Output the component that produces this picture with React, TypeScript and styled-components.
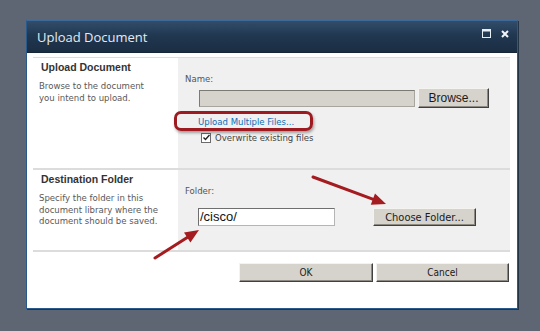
import React from "react"
import styled, { createGlobalStyle } from "styled-components"

const GlobalStyle = createGlobalStyle`
  html, body {
    margin: 0;
    padding: 0;
    background: #5d6672;
  }
  body {
    width: 540px;
    height: 331px;
    overflow: hidden;
    font-family: "DejaVu Sans Condensed", "DejaVu Sans", sans-serif;
  }
`

const App: React.FC = () => {
  return (
    <>
      <GlobalStyle />
      <Dialog>
        <TitleBar>
          <Title>Upload Document</Title>
          <TitleIcons>
            <svg width="9" height="9" viewBox="0 0 9 9">
              <rect x="0.5" y="0.5" width="8" height="8" fill="none" stroke="#e8eef4" strokeWidth="1" />
              <rect x="0.5" y="0.5" width="8" height="2" fill="#e8eef4" />
            </svg>
            <svg width="8" height="8" viewBox="0 0 8 8">
              <path d="M1 1 L7 7 M7 1 L1 7" stroke="#f2f5f8" strokeWidth="2" />
            </svg>
          </TitleIcons>
        </TitleBar>
        <Body>
          <Panel>
            <Section $height={110}>
              <Info>
                <InfoTitle>Upload Document</InfoTitle>
                <InfoText>Browse to the document<br />you intend to upload.</InfoText>
              </Info>
              <Fields>
                <Label>Name:</Label>
                <Row $indent={14} $top={4}>
                  <FileInput />
                  <WinButton $width={71} $height={20} $font="Liberation Sans" $size={12}>Browse...</WinButton>
                </Row>
                <LinkText>Upload Multiple Files...</LinkText>
                <CheckRow>
                  <CheckBox>
                    <svg width="7" height="7" viewBox="0 0 7 7">
                      <path d="M0.5 3.5 L2.5 5.5 L6.5 1" fill="none" stroke="#222" strokeWidth="1.4" />
                    </svg>
                  </CheckBox>
                  <CheckLabel>Overwrite existing files</CheckLabel>
                </CheckRow>
              </Fields>
            </Section>
            <Section $height={80}>
              <Info>
                <InfoTitle>Destination Folder</InfoTitle>
                <InfoText>Specify the folder in this<br />document library where the<br />document should be saved.</InfoText>
              </Info>
              <Fields>
                <Label>Folder:</Label>
                <Row $indent={13} $top={12}>
                  <FolderInput>/cisco/</FolderInput>
                  <Spacer $width={32} />
                  <WinButton $width={103} $height={18} $font="DejaVu Sans Condensed" $size={11}>Choose Folder...</WinButton>
                </Row>
              </Fields>
            </Section>
          </Panel>
          <Footer>
            <WinButton $width={134} $height={19} $font="DejaVu Sans Condensed" $size={10}>OK</WinButton>
            <WinButton $width={133} $height={19} $font="DejaVu Sans Condensed" $size={10}>Cancel</WinButton>
          </Footer>
        </Body>
        <Highlight />
        <Arrows width="492" height="289" viewBox="0 0 492 289">
          <line x1="287" y1="157" x2="348" y2="179.6" stroke="#a41b20" strokeWidth="3" strokeLinecap="round" />
          <polygon points="360,184 344.8,184.7 349,173.5" fill="#a41b20" />
          <line x1="129" y1="238" x2="162" y2="217" stroke="#a41b20" strokeWidth="3" strokeLinecap="round" />
          <polygon points="173,210 164.4,222.6 158,212.4" fill="#a41b20" />
        </Arrows>
      </Dialog>
    </>
  )
}

export default App

const Dialog = styled.div`
  position: relative;
  margin: 20px 0 0 26px;
  width: 492px;
  height: 289px;
  box-sizing: border-box;
  border: 1px solid #2a5a8c;
  border-top-color: #3d6a98;
  background: #fff;
  display: flex;
  flex-direction: column;
  box-shadow: 1px 1px 0 #243447;
`

const TitleBar = styled.div`
  height: 31px;
  flex: none;
  display: flex;
  align-items: center;
  justify-content: space-between;
  padding: 0 8px 0 10px;
  background: linear-gradient(#324d6a 0%, #213851 45%, #1a2d43 100%);
  border-bottom: 1px solid #162538;
`

const Title = styled.span`
  font-family: "Open Sans", "DejaVu Sans", sans-serif;
  font-size: 13px;
  color: #e4ebf2;
  margin-top: 1px;
`

const TitleIcons = styled.div`
  display: flex;
  align-items: center;
  gap: 10px;
  margin-top: -6px;
`

const Body = styled.div`
  flex: 1;
  display: flex;
  flex-direction: column;
  padding: 4px 7px 0 6px;
`

const Panel = styled.div`
  border-top: 1px solid #dcdde3;
  border-bottom: 2px solid #dcdcdc;
`

const Section = styled.div<{ $height: number }>`
  height: ${p => p.$height}px;
  display: flex;
  & + & {
    border-top: 2px solid #dcdcdc;
  }
`

const Info = styled.div`
  width: 145px;
  flex: none;
  padding: 3px 4px 0 6px;
  box-sizing: border-box;
  white-space: nowrap;
`

const InfoTitle = styled.div`
  font-family: "Liberation Sans", Arial, sans-serif;
  font-weight: bold;
  font-size: 10.5px;
  line-height: 12px;
  color: #333;
  margin-left: 2px;
`

const InfoText = styled.div`
  font-size: 9.5px;
  line-height: 11.5px;
  color: #595959;
  margin-top: 7px;
`

const Fields = styled.div`
  flex: 1;
  background: #f0f0f0;
  padding: 15px 0 0 7px;
`

const Label = styled.div`
  font-size: 9.5px;
  line-height: 11px;
  color: #555;
`

const Row = styled.div<{ $indent: number; $top: number }>`
  display: flex;
  align-items: center;
  gap: 3px;
  margin: ${p => p.$top}px 0 0 ${p => p.$indent}px;
`

const Spacer = styled.div<{ $width: number }>`
  width: ${p => p.$width}px;
`

const FileInput = styled.div`
  width: 216px;
  height: 17px;
  box-sizing: border-box;
  background: #d6d3cc;
  border: 1px solid #a8a59e;
  border-top-color: #7c7a75;
  border-left-color: #7c7a75;
`

const FolderInput = styled.div`
  width: 137px;
  height: 18px;
  box-sizing: border-box;
  background: #fff;
  border: 1px solid #b5b5b5;
  border-top-color: #6f6f6f;
  border-left-color: #6f6f6f;
  font-family: "Liberation Sans", Arial, sans-serif;
  font-size: 13px;
  line-height: 16px;
  padding-left: 1px;
  color: #111;
`

const WinButton = styled.div<{ $width: number; $height: number; $font: string; $size: number }>`
  width: ${p => p.$width}px;
  height: ${p => p.$height}px;
  box-sizing: border-box;
  background: #d6d3cd;
  border: 1px solid;
  border-color: #f4f3f0 #404040 #404040 #f4f3f0;
  box-shadow: inset -1px -1px 0 #8d8a84;
  display: flex;
  align-items: center;
  justify-content: center;
  font-family: "${p => p.$font}", sans-serif;
  font-size: ${p => p.$size}px;
  color: #1a1a1a;
`

const LinkText = styled.div`
  margin: 8px 0 0 13px;
  font-size: 9.5px;
  line-height: 11px;
  color: #0a6fb8;
`

const CheckRow = styled.div`
  display: flex;
  align-items: center;
  gap: 4px;
  margin: 5px 0 0 16px;
`

const CheckBox = styled.div`
  width: 10px;
  height: 10px;
  box-sizing: border-box;
  border: 1px solid #6b6b6b;
  background: #fff;
  display: flex;
  align-items: center;
  justify-content: center;
`

const CheckLabel = styled.span`
  font-size: 9.5px;
  line-height: 11px;
  color: #444;
`

const Footer = styled.div`
  display: flex;
  justify-content: flex-end;
  gap: 3px;
  padding: 11px 1px 0 0;
`

const Highlight = styled.div`
  position: absolute;
  left: 147px;
  top: 90px;
  width: 133px;
  height: 14px;
  border: 3px solid #9c1a20;
  border-radius: 7px;
  box-shadow: 1px 2px 3px rgba(0, 0, 0, 0.35);
  pointer-events: none;
`

const Arrows = styled.svg`
  position: absolute;
  left: -1px;
  top: -1px;
  pointer-events: none;
  overflow: visible;
`
